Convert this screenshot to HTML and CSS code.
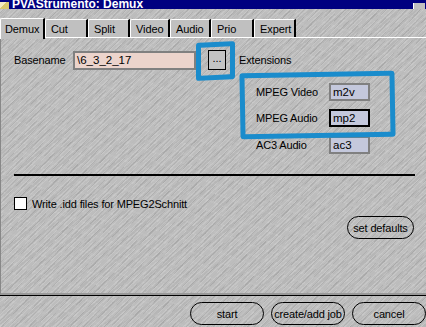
FILE: index.html
```html
<!DOCTYPE html>
<html lang="en">
<head>
  <meta charset="UTF-8" />
  <title>PVAStrumento: Demux</title>
  <link rel="stylesheet" href="styles.css">
</head>
<body>
  <div class="window">
    <div class="titlebar">
      <span class="title-icon"></span>
      <span class="title-text">PVAStrumento: Demux</span>
      <span class="title-btn"></span>
    </div>

    <div class="tabstrip">
      <div class="tab active">Demux</div>
      <div class="tab">Cut</div>
      <div class="tab">Split</div>
      <div class="tab">Video</div>
      <div class="tab">Audio</div>
      <div class="tab">Prio</div>
      <div class="tab">Expert</div>
    </div>

    <div class="panel">
      <div class="row-base">
        <span class="label base-label">Basename</span>
        <div class="field base-field">\6_3_2_17</div>
        <div class="browse">...</div>
        <span class="label ext-label">Extensions</span>
      </div>

      <div class="ext-list">
        <div class="ext-row">
          <span class="label">MPEG Video</span>
          <div class="field ext-field">m2v</div>
        </div>
        <div class="ext-row">
          <span class="label">MPEG Audio</span>
          <div class="field ext-field focused">mp2</div>
        </div>
        <div class="ext-row">
          <span class="label">AC3 Audio</span>
          <div class="field ext-field">ac3</div>
        </div>
      </div>

      <div class="separator"></div>

      <label class="check-row">
        <span class="checkbox"></span>
        <span class="label">Write .idd files for MPEG2Schnitt</span>
      </label>

      <div class="defaults-row">
        <div class="pill">set defaults</div>
      </div>

      <!-- blue marker annotations drawn over the dialog -->
      <div class="mark mark-browse"></div>
      <div class="mark mark-ext"></div>
    </div>

    <div class="footer">
      <div class="pill wide">start</div>
      <div class="pill wide">create/add job</div>
      <div class="pill wide">cancel</div>
    </div>
  </div>
</body>
</html>
```

FILE: styles.css
```css
html, body {
  margin: 0;
  padding: 0;
  overflow: hidden;
  height: 100%;
  font-family: 'Liberation Sans', Arial, sans-serif;
  font-size: 11px;
  color: #000;
}

.window {
  width: 426px;
  height: 327px;
  display: flex;
  flex-direction: column;
  background-color: #bdbdbd;
  background-image:
    repeating-linear-gradient(-42deg, rgba(255,255,255,0.14) 0 1px, transparent 1px 3px),
    repeating-linear-gradient(-47deg, rgba(0,0,0,0.07) 0 1px, transparent 1px 5px),
    repeating-linear-gradient(-38deg, rgba(0,0,0,0.04) 0 3px, transparent 3px 11px),
    repeating-linear-gradient(20deg, rgba(255,255,255,0.05) 0 2px, transparent 2px 9px);
}

.titlebar {
  height: 9px;
  background: #000080;
  display: flex;
  align-items: flex-end;
  overflow: hidden;
}

.title-icon {
  width: 9px;
  height: 7px;
  margin: 0 3px 0 0;
  background: linear-gradient(135deg, #f4ecc0 0 40%, #d8c870 40% 100%);
}

.title-text {
  color: #fff;
  font-weight: bold;
  font-size: 12px;
  line-height: 12px;
  margin-bottom: -1px;
  white-space: nowrap;
}

.title-btn {
  margin-left: auto;
  width: 11px;
  height: 6px;
  margin-right: 1px;
  background: #c0c0c0;
  border-left: 1px solid #fff;
}

.tabstrip {
  height: 29px;
  display: flex;
  align-items: flex-end;
  border-bottom: 1px solid #fff;
  box-sizing: border-box;
}

.tab {
  height: 18px;
  box-sizing: border-box;
  padding: 3px 0 0 5px;
  background: #c0c0c0;
  border-top: 1px solid #fff;
  border-left: 1px solid #fff;
  border-right: 2px solid #000;
  border-top-left-radius: 2px;
  font-size: 11px;
  letter-spacing: -0.1px;
  white-space: nowrap;
}

.tab:nth-child(1) { width: 45px; }
.tab:nth-child(2) { width: 43px; }
.tab:nth-child(3) { width: 42px; }
.tab:nth-child(4) { width: 40px; }
.tab:nth-child(5) { width: 41px; }
.tab:nth-child(6) { width: 43px; }
.tab:nth-child(7) { width: 42px; }

.tab.active {
  height: 21px;
  margin-bottom: -2px;
  padding: 4px 0 0 4px;
  position: relative;
  z-index: 1;
}

.panel {
  position: relative;
  height: 257px;
  box-sizing: border-box;
  padding: 12px 12px 0 13px;
  border-left: 1px solid #888;
  border-bottom: 2px solid #999;
  display: flex;
  flex-direction: column;
}

.label {
  font-size: 11px;
  letter-spacing: -0.15px;
  white-space: nowrap;
}

.row-base {
  display: flex;
  align-items: center;
  height: 20px;
}

.base-label {
  width: 59px;
}

.field {
  box-sizing: border-box;
  border: 2px solid #808080;
  padding: 0 0 0 2px;
  font-size: 11.5px;
  display: flex;
  align-items: center;
}

.base-field {
  width: 123px;
  height: 19px;
  background: #ecd4cc;
}

.browse {
  width: 18px;
  height: 20px;
  box-sizing: border-box;
  margin-left: 12px;
  border: 1px solid #000;
  background: #c4c4c4;
  text-align: center;
  line-height: 15px;
  font-size: 11px;
}

.ext-label {
  margin-left: 13px;
}

.ext-list {
  display: flex;
  flex-direction: column;
  gap: 8px;
  margin: 13px 0 0 242px;
}

.ext-row {
  display: flex;
  align-items: center;
  height: 18px;
}

.ext-row .label {
  width: 73px;
}

.ext-field {
  width: 41px;
  height: 18px;
  background: #c4c8dc;
}

.ext-field.focused {
  border-color: #000;
}

.ext-row:nth-child(3) {
  margin-top: 1px;
}

.separator {
  height: 2px;
  background: #000;
  margin: 20px 0 0 0;
  width: 401px;
}

.check-row {
  display: flex;
  align-items: center;
  gap: 5px;
  margin-top: 21px;
}

.checkbox {
  width: 13px;
  height: 13px;
  box-sizing: border-box;
  border: 1px solid #000;
  background: #fff;
}

.defaults-row {
  display: flex;
  justify-content: flex-end;
  margin-top: 6px;
}

.pill {
  height: 23px;
  box-sizing: border-box;
  border: 1px solid #000;
  border-radius: 12px;
  display: flex;
  align-items: center;
  justify-content: center;
  font-size: 11px;
  letter-spacing: -0.15px;
  white-space: nowrap;
}

.defaults-row .pill {
  width: 67px;
}

.footer {
  flex: 1;
  border-top: 1px solid #000;
  display: flex;
  justify-content: flex-end;
  align-items: flex-start;
  gap: 7px;
  padding-top: 6px;
}

.pill.wide {
  width: 74px;
}

.mark {
  position: absolute;
  border: 5px solid #1a8ccc;
  border-radius: 3px;
  box-sizing: border-box;
}

.mark-browse {
  left: 195px;
  top: 4px;
  width: 39px;
  height: 38px;
  transform: skewY(-3deg);
}

.mark-ext {
  left: 239px;
  top: 34px;
  width: 155px;
  height: 66px;
  transform: rotate(-1deg);
}
```
